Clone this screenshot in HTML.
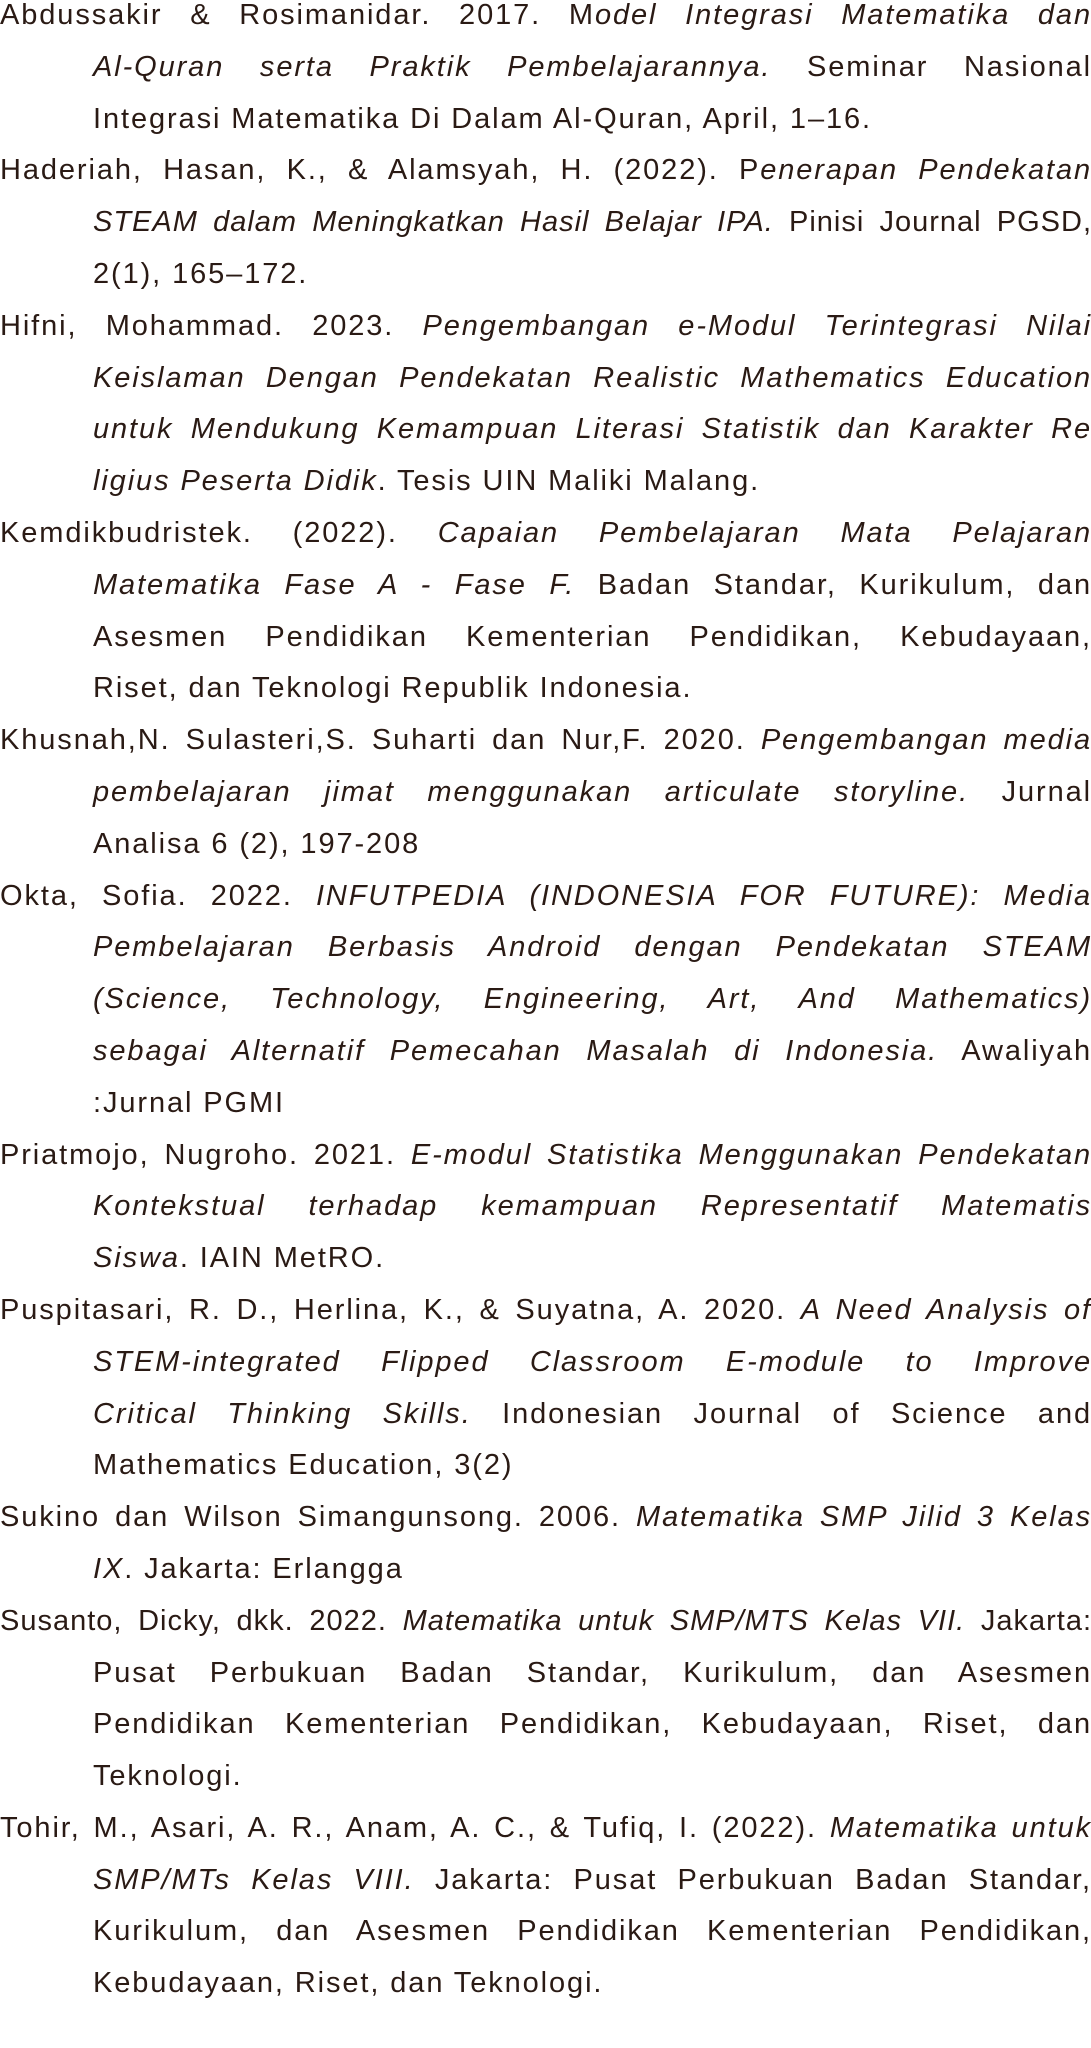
<!DOCTYPE html>
<html><head><meta charset="utf-8"><style>
html,body{margin:0;padding:0;background:#fff;}
body{width:1091px;height:2048px;overflow:hidden;font-family:"Liberation Sans",sans-serif;color:#2a1a14;font-size:29px;letter-spacing:1.9px;}
.w{position:absolute;top:-10px;left:0;width:1092px;}
.l{height:51.8px;line-height:51.8px;white-space:nowrap;overflow:visible;}
.j{text-align:justify;text-align-last:justify;white-space:normal;overflow:hidden;}
.i{padding-left:93px;}
.t{letter-spacing:1px;}
</style></head><body><div class="w">
<div class="l j">Abdussakir &amp; Rosimanidar. 2017. M<i>odel Integrasi Matematika dan</i></div>
<div class="l j i"><i>Al-Quran serta Praktik Pembelajarannya.</i> Seminar Nasional</div>
<div class="l i">Integrasi Matematika Di Dalam Al-Quran, April, 1–16.</div>
<div class="l j">Haderiah, Hasan, K., &amp; Alamsyah, H. (2022). P<i>enerapan Pendekatan</i></div>
<div class="l j i t"><i>STEAM dalam Meningkatkan Hasil Belajar IPA.</i> Pinisi Journal PGSD,</div>
<div class="l i">2(1), 165–172.</div>
<div class="l j">Hifni, Mohammad. 2023. <i>Pengembangan e-Modul Terintegrasi Nilai</i></div>
<div class="l j i"><i>Keislaman Dengan Pendekatan Realistic Mathematics Education</i></div>
<div class="l j i"><i>untuk Mendukung Kemampuan Literasi Statistik dan Karakter Re</i></div>
<div class="l i"><i>ligius Peserta Didik</i>. Tesis UIN Maliki Malang.</div>
<div class="l j">Kemdikbudristek. (2022). <i>Capaian Pembelajaran Mata Pelajaran</i></div>
<div class="l j i"><i>Matematika Fase A - Fase F.</i> Badan Standar, Kurikulum, dan</div>
<div class="l j i">Asesmen Pendidikan Kementerian Pendidikan, Kebudayaan,</div>
<div class="l i">Riset, dan Teknologi Republik Indonesia.</div>
<div class="l j">Khusnah,N. Sulasteri,S. Suharti dan Nur,F. 2020. <i>Pengembangan media</i></div>
<div class="l j i"><i>pembelajaran jimat menggunakan articulate storyline.</i> Jurnal</div>
<div class="l i">Analisa 6 (2), 197-208</div>
<div class="l j">Okta, Sofia. 2022. <i>INFUTPEDIA (INDONESIA FOR FUTURE): Media</i></div>
<div class="l j i"><i>Pembelajaran Berbasis Android dengan Pendekatan STEAM</i></div>
<div class="l j i"><i>(Science, Technology, Engineering, Art, And Mathematics)</i></div>
<div class="l j i"><i>sebagai Alternatif Pemecahan Masalah di Indonesia.</i> Awaliyah</div>
<div class="l i">:Jurnal PGMI</div>
<div class="l j">Priatmojo, Nugroho. 2021. <i>E-modul Statistika Menggunakan Pendekatan</i></div>
<div class="l j i"><i>Kontekstual terhadap kemampuan Representatif Matematis</i></div>
<div class="l i"><i>Siswa</i>. IAIN MetRO.</div>
<div class="l j">Puspitasari, R. D., Herlina, K., &amp; Suyatna, A. 2020. <i>A Need Analysis of</i></div>
<div class="l j i"><i>STEM-integrated Flipped Classroom E-module to Improve</i></div>
<div class="l j i"><i>Critical Thinking Skills.</i> Indonesian Journal of Science and</div>
<div class="l i">Mathematics Education, 3(2)</div>
<div class="l j">Sukino dan Wilson Simangunsong. 2006. <i>Matematika SMP Jilid 3 Kelas</i></div>
<div class="l i"><i>IX</i>. Jakarta: Erlangga</div>
<div class="l j t">Susanto, Dicky, dkk. 2022. <i>Matematika untuk SMP/MTS Kelas VII.</i> Jakarta:</div>
<div class="l j i">Pusat Perbukuan Badan Standar, Kurikulum, dan Asesmen</div>
<div class="l j i">Pendidikan Kementerian Pendidikan, Kebudayaan, Riset, dan</div>
<div class="l i">Teknologi.</div>
<div class="l j">Tohir, M., Asari, A. R., Anam, A. C., &amp; Tufiq, I. (2022). <i>Matematika untuk</i></div>
<div class="l j i"><i>SMP/MTs Kelas VIII.</i> Jakarta: Pusat Perbukuan Badan Standar,</div>
<div class="l j i">Kurikulum, dan Asesmen Pendidikan Kementerian Pendidikan,</div>
<div class="l i">Kebudayaan, Riset, dan Teknologi.</div>
</div></body></html>
